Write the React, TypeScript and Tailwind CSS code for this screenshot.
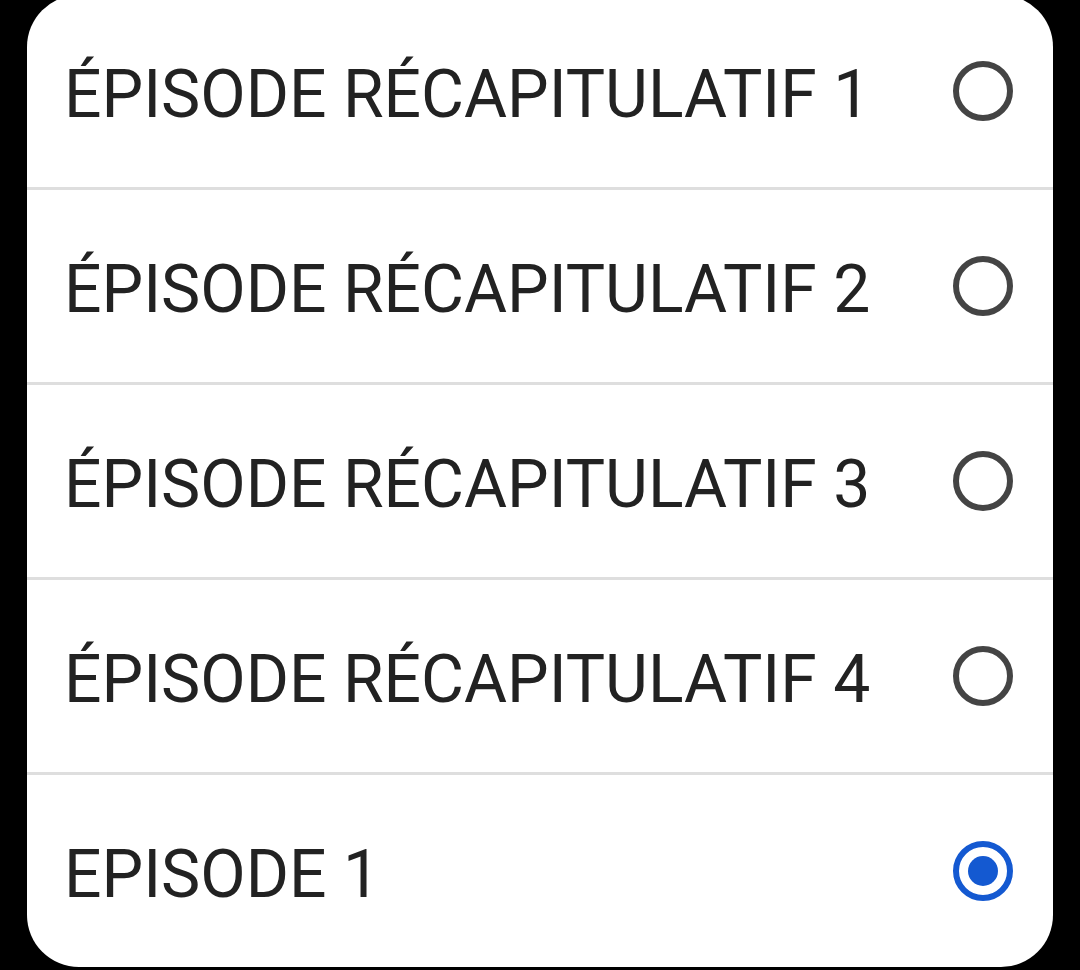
import { useState } from "react";

const options = [
  "ÉPISODE RÉCAPITULATIF 1",
  "ÉPISODE RÉCAPITULATIF 2",
  "ÉPISODE RÉCAPITULATIF 3",
  "ÉPISODE RÉCAPITULATIF 4",
  "EPISODE 1",
];

const Radio = ({ checked }: { checked: boolean }) =>
  checked ? (
    <span className="flex h-[60px] w-[60px] items-center justify-center rounded-full border-[6px] border-[#1459d1]">
      <span className="h-[30px] w-[30px] rounded-full bg-[#1459d1]" />
    </span>
  ) : (
    <span className="h-[60px] w-[60px] rounded-full border-[6px] border-[#444444]" />
  );

const App = () => {
  const [selected, setSelected] = useState(4);

  return (
    <div className="h-[970px] w-[1080px] overflow-hidden bg-black px-[27px]">
      <ul className="-mt-[5px] overflow-hidden rounded-[52px] bg-white">
        {options.map((label, index) => (
          <li
            key={label}
            onClick={() => setSelected(index)}
            className={`flex h-[192px] cursor-pointer items-center justify-between pl-[37px] pr-[40px] ${
              index < options.length - 1 ? "box-content border-b-[3px] border-[#dedede]" : ""
            }`}
          >
            <span className="pt-2 font-['Roboto',sans-serif] text-[66px] leading-none text-[#222222]">
              {label}
            </span>
            <Radio checked={selected === index} />
          </li>
        ))}
      </ul>
    </div>
  );
};

export default App;
